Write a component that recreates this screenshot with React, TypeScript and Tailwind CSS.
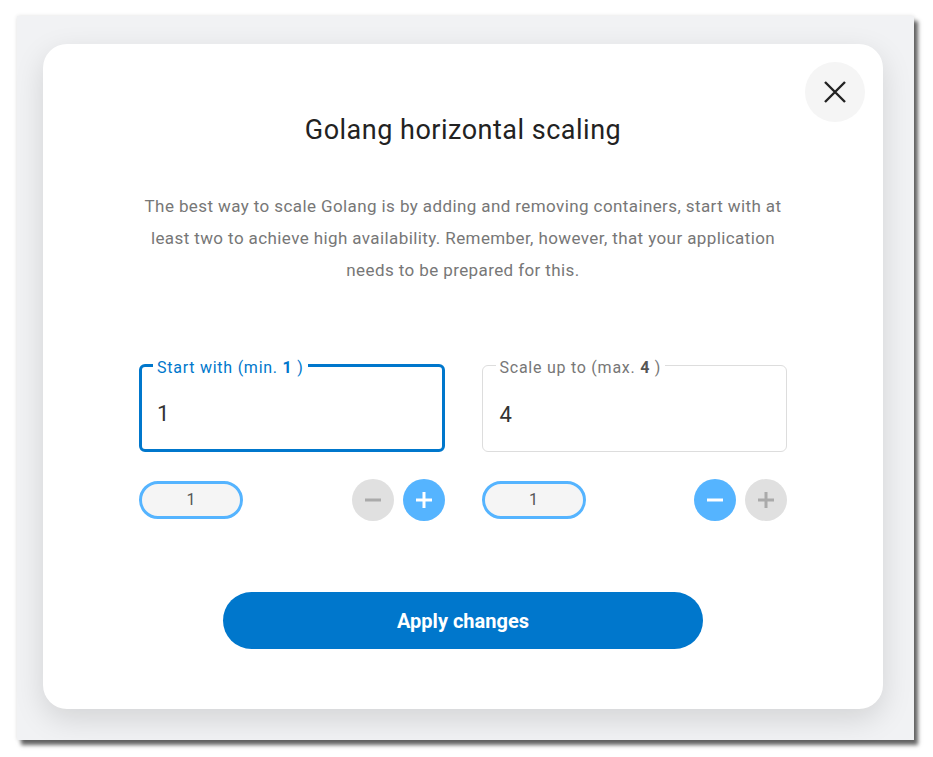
import { useState } from "react";

const font = { fontFamily: "Roboto, 'Noto Sans', sans-serif" };

const Minus = ({ color }: { color: string }) => (
  <svg width="18" height="18" viewBox="0 0 18 18">
    <line x1="1" y1="9" x2="17" y2="9" stroke={color} strokeWidth="3" />
  </svg>
);

const Plus = ({ color }: { color: string }) => (
  <svg width="18" height="18" viewBox="0 0 18 18">
    <line x1="1" y1="9" x2="17" y2="9" stroke={color} strokeWidth="3" />
    <line x1="9" y1="1" x2="9" y2="17" stroke={color} strokeWidth="3" />
  </svg>
);

const Stepper = ({ minusOn, plusOn }: { minusOn: boolean; plusOn: boolean }) => (
  <div className="mt-[27px] flex items-center justify-between">
    <div className="flex h-[38px] w-[104px] items-center justify-center rounded-full border-[3px] border-[#55b4ff] bg-[#f5f5f5] text-[16px] text-[#555555]">
      1
    </div>
    <div className="flex items-center gap-[9px]">
      <button
        className={
          minusOn
            ? "flex h-[42px] w-[42px] items-center justify-center rounded-full bg-[#55b4ff]"
            : "flex h-[42px] w-[42px] items-center justify-center rounded-full bg-[#e0e0e0]"
        }
      >
        <Minus color={minusOn ? "#ffffff" : "#aaaaaa"} />
      </button>
      <button
        className={
          plusOn
            ? "flex h-[42px] w-[42px] items-center justify-center rounded-full bg-[#55b4ff]"
            : "flex h-[42px] w-[42px] items-center justify-center rounded-full bg-[#e0e0e0]"
        }
      >
        <Plus color={plusOn ? "#ffffff" : "#aaaaaa"} />
      </button>
    </div>
  </div>
);

export default function App() {
  const [open] = useState(true);

  return (
    <div className="min-h-[757px] w-[933px] bg-white pl-[17px] pt-[16px]" style={font}>
      <div className="h-[724px] w-[897px] bg-[#f1f2f4] pl-[26px] pr-[31px] pt-[28px] shadow-[4px_5px_4px_rgba(0,0,0,0.6),0_0_4px_rgba(0,0,0,0.12)]">
        {open && (
          <div className="relative h-[665px] w-[840px] rounded-[24px] bg-white px-[96px] pt-[70px] shadow-[0_10px_30px_rgba(0,0,0,0.13)]">
            <button className="absolute right-[18px] top-[18px] flex h-[60px] w-[60px] items-center justify-center rounded-full bg-[#f5f5f5]">
              <svg width="22" height="22" viewBox="0 0 22 22">
                <path d="M1 1 L21 21 M21 1 L1 21" stroke="#222222" strokeWidth="2.4" />
              </svg>
            </button>

            <h2 className="text-center text-[27px] leading-8 tracking-[0.5px] text-[#222222]">
              Golang horizontal scaling
            </h2>

            <p className="mt-[44px] text-center text-[17px] leading-[32px] tracking-[0.4px] text-[#777777]">
              The best way to scale Golang is by adding and removing containers, start with at
              <br />
              least two to achieve high availability. Remember, however, that your application
              <br />
              needs to be prepared for this.
            </p>

            <div className="mt-[69px] grid grid-cols-2 gap-[37px]">
              <div>
                <fieldset className="h-[97px] rounded-[6px] border-[3px] border-[#0077cc] pl-[11px] pr-3">
                  <legend className="px-1 text-[16px] leading-5 tracking-[0.75px] text-[#0077cc]">
                    <span className="relative top-[3px]">
                      Start with (min. <b className="font-bold">1</b> )
                    </span>
                  </legend>
                  <div className="mt-[25px] pl-1 text-[22px] leading-7 text-[#333333]">1</div>
                </fieldset>
                <Stepper minusOn={false} plusOn={true} />
              </div>
              <div>
                <fieldset className="h-[97px] rounded-[6px] border border-[#dddddd] pl-[13px] pr-3">
                  <legend className="px-1 text-[16px] leading-5 tracking-[0.75px] text-[#777777]">
                    <span className="relative top-[3px]">
                      Scale up to (max. <b className="font-bold text-[#555555]">4</b> )
                    </span>
                  </legend>
                  <div className="mt-[26px] pl-1 text-[22px] leading-7 text-[#333333]">4</div>
                </fieldset>
                <Stepper minusOn={true} plusOn={false} />
              </div>
            </div>

            <div className="mt-[71px] flex justify-center">
              <button className="h-[57px] w-[480px] rounded-full bg-[#0077cc] text-[20px] font-bold text-white">
                Apply changes
              </button>
            </div>
          </div>
        )}
      </div>
    </div>
  );
}
